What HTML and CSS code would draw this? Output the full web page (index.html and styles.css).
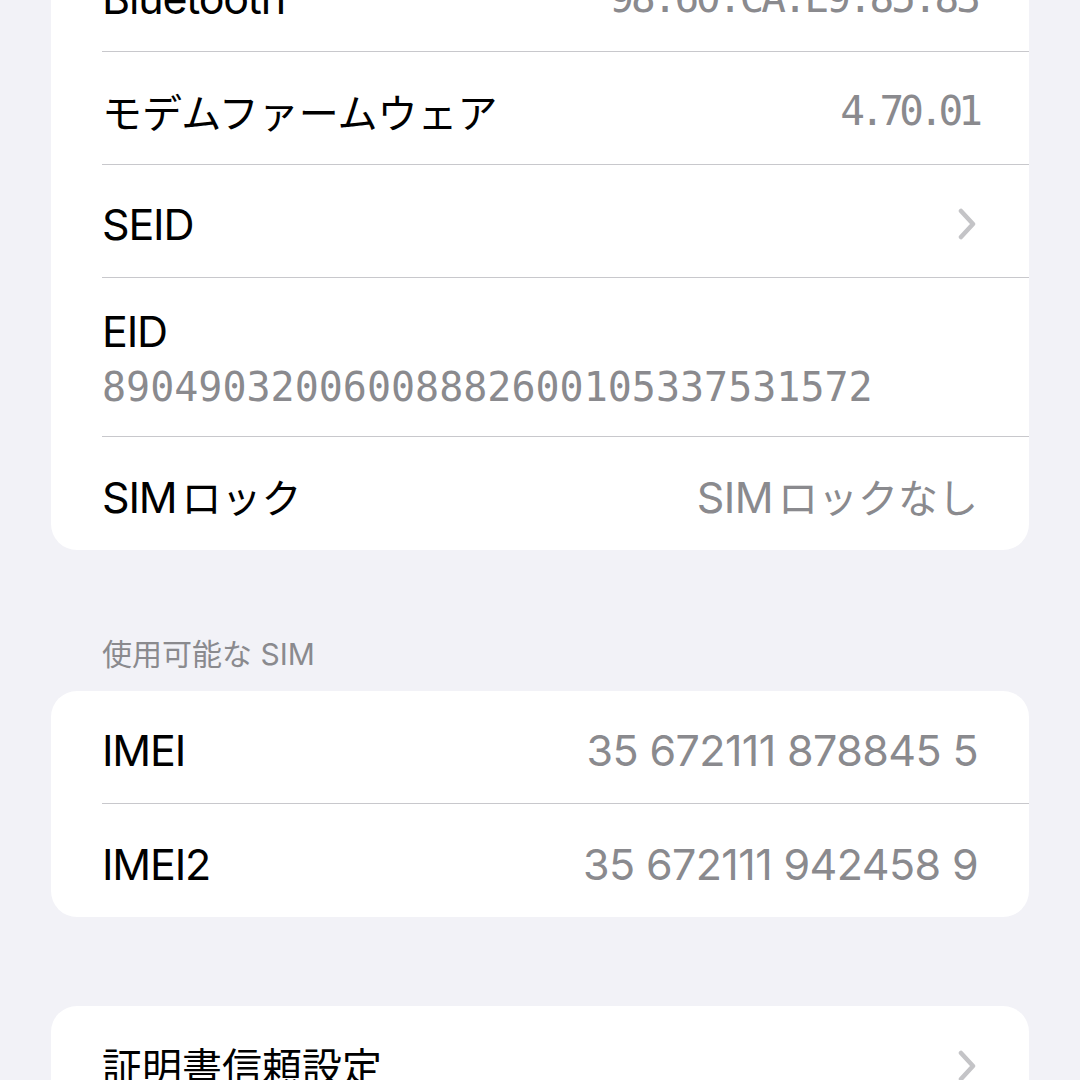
FILE: index.html
```html
<!DOCTYPE html>
<html lang="ja">
<head>
    <meta charset="UTF-8">
    <meta name="viewport" content="width=device-width, initial-scale=1.0">
    <title>情報</title>
    <link rel="stylesheet" href="styles.css">
</head>
<body>
    <div class="page">
        <div class="group first">
            <div class="row">
                <div class="row-inner">
                    <span class="label">Bluetooth</span>
                    <span class="value mono wide">98:60:CA:E9:85:83</span>
                </div>
            </div>
            <div class="row">
                <div class="row-inner">
                    <span class="label"><span class="ja">モデムファームウェア</span></span>
                    <span class="value mono">4.70.01</span>
                </div>
            </div>
            <div class="row">
                <div class="row-inner">
                    <span class="label">SEID</span>
                    <svg class="chevron" width="18" height="32" viewBox="0 0 18 32">
                        <path d="M3 3 L15 16 L3 29" fill="none" stroke="#c4c4c7" stroke-width="4.5" stroke-linecap="round" stroke-linejoin="round"/>
                    </svg>
                </div>
            </div>
            <div class="row">
                <div class="row-inner stacked">
                    <span class="label">EID</span>
                    <span class="value eid">89049032006008882600105337531572</span>
                </div>
            </div>
            <div class="row">
                <div class="row-inner">
                    <span class="label">SIM<span class="ja after-latin">ロック</span></span>
                    <span class="value">SIM<span class="ja after-latin">ロックなし</span></span>
                </div>
            </div>
        </div>

        <div class="section-header">使用可能な SIM</div>
        <div class="group">
            <div class="row">
                <div class="row-inner">
                    <span class="label">IMEI</span>
                    <span class="value">35 672111 878845 5</span>
                </div>
            </div>
            <div class="row">
                <div class="row-inner">
                    <span class="label">IMEI2</span>
                    <span class="value">35 672111 942458 9</span>
                </div>
            </div>
        </div>

        <div class="group spaced">
            <div class="row">
                <div class="row-inner">
                    <span class="label"><span class="ja">証明書信頼設定</span></span>
                    <svg class="chevron" width="18" height="32" viewBox="0 0 18 32">
                        <path d="M3 3 L15 16 L3 29" fill="none" stroke="#c4c4c7" stroke-width="4.5" stroke-linecap="round" stroke-linejoin="round"/>
                    </svg>
                </div>
            </div>
        </div>
    </div>
</body>
</html>
```

FILE: styles.css
```css
* {
    box-sizing: border-box;
    margin: 0;
    padding: 0;
}

body {
    font-family: Inter, 'Noto Sans CJK JP', sans-serif;
    background: #f2f2f7;
    color: #000;
    height: 1080px;
    overflow: hidden;
}

.page {
    padding: 0 51px;
}

.group {
    background: #fff;
    border-radius: 26px;
    overflow: hidden;
}

.group.first {
    margin-top: -61px;
}

.group.spaced {
    margin-top: 89px;
}

.row {
    padding-left: 51px;
}

.row-inner {
    display: flex;
    align-items: center;
    justify-content: space-between;
    height: 113px;
    padding: 6px 51px 0 0;
    border-bottom: 1px solid #c8c8cc;
}

.row:last-child .row-inner {
    border-bottom: none;
}

.row-inner.stacked {
    flex-direction: column;
    align-items: flex-start;
    justify-content: center;
    height: 159px;
    padding-top: 4px;
}

.label {
    font-size: 43px;
    letter-spacing: -1.2px;
    line-height: 56px;
}

.value {
    font-size: 43px;
    letter-spacing: -0.6px;
    line-height: 56px;
    color: #8a8a8e;
}

/* kana and kanji sit a bit smaller than the latin text */
.ja {
    font-family: 'Noto Sans CJK JP', sans-serif;
    font-size: 40px;
    letter-spacing: 0;
}

.ja.after-latin {
    margin-left: 5px;
}

.mono {
    font-family: 'DejaVu Sans Mono', monospace;
    font-size: 41px;
    letter-spacing: -5px;
}

.mono.wide {
    letter-spacing: -3px;
}

.eid {
    font-family: 'DejaVu Sans Mono', monospace;
    font-size: 40px;
    letter-spacing: 0;
}

.chevron {
    margin-right: 2px;
}

.section-header {
    padding: 86px 0 19px 51px;
    font-size: 30px;
    line-height: 36px;
    color: #8a8a8e;
}
```
